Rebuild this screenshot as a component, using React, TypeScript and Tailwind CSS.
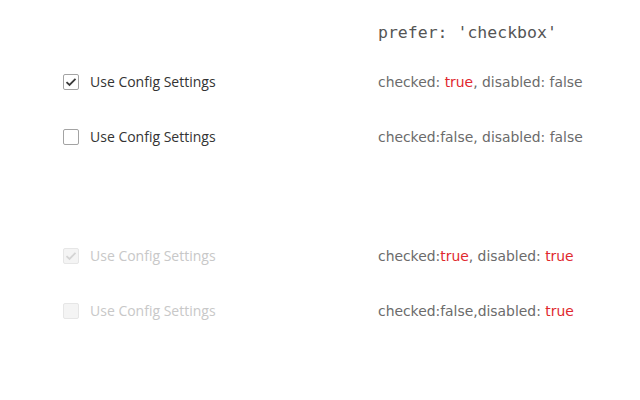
import { FC } from 'react';

type Row = {
  checked: boolean;
  disabled: boolean;
  status: JSX.Element;
};

const Red: FC<{ children: string }> = ({ children }) => (
  <span className="text-[#e0282e]">{children}</span>
);

const Box: FC<{ checked: boolean; disabled: boolean }> = ({ checked, disabled }) => (
  <span
    className={`flex h-4 w-4 items-center justify-center rounded-[2px] border ${
      disabled ? 'border-[#e6e6e6] bg-[#f4f4f4]' : 'border-[#a3a3a3] bg-white'
    }`}
  >
    {checked && (
      <svg width="12" height="10" viewBox="0 0 12 10" fill="none">
        <path
          d="M1.5 5.2 L4.5 8 L10.5 1.8"
          stroke={disabled ? '#d4d4d4' : '#3a3a3a'}
          strokeWidth="1.8"
        />
      </svg>
    )}
  </span>
);

const rows: Row[] = [
  {
    checked: true,
    disabled: false,
    status: (
      <>
        checked: <Red>true</Red>, disabled: false
      </>
    ),
  },
  {
    checked: false,
    disabled: false,
    status: <>checked:false, disabled: false</>,
  },
  {
    checked: true,
    disabled: true,
    status: (
      <>
        checked:<Red>true</Red>, disabled: <Red>true</Red>
      </>
    ),
  },
  {
    checked: false,
    disabled: true,
    status: (
      <>
        checked:false,disabled: <Red>true</Red>
      </>
    ),
  },
];

const CheckRow: FC<{ row: Row }> = ({ row }) => (
  <div className="flex h-[55px] items-center">
    <label className="flex w-[315px] items-center gap-[11px]">
      <Box checked={row.checked} disabled={row.disabled} />
      <span className={row.disabled ? 'text-[#c8c8c8]' : 'text-[#333]'}>Use Config Settings</span>
    </label>
    <div className="pt-[1px] font-['DejaVu_Sans',sans-serif] text-[13.9px] text-[#6b6b6b]">{row.status}</div>
  </div>
);

const App: FC = () => {
  return (
    <div className="h-[400px] w-[640px] bg-white pl-[63px] pt-[22px] text-[14px] font-['Open_Sans',sans-serif]">
      <div className="pl-[315px] font-['DejaVu_Sans_Mono',monospace] text-[16.5px] leading-[22px] text-[#555]">
        prefer: 'checkbox'
      </div>
      <div className="mt-[10px]">
        <CheckRow row={rows[0]} />
        <CheckRow row={rows[1]} />
      </div>
      <div className="mt-[64px]">
        <CheckRow row={rows[2]} />
        <CheckRow row={rows[3]} />
      </div>
    </div>
  );
};

export default App;
